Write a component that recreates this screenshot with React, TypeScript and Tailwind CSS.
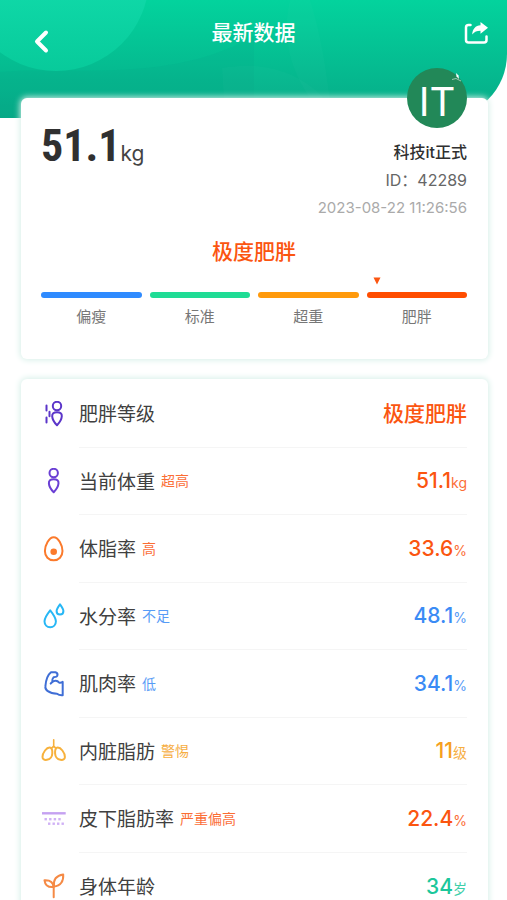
import type { ReactNode } from "react";

const Svg = ({ children }: { children: ReactNode }) => (
  <svg
    viewBox="0 0 26 26"
    className="h-[26px] w-[26px] shrink-0"
    fill="none"
    strokeWidth="2"
    strokeLinecap="round"
    strokeLinejoin="round"
    aria-hidden="true"
  >
    {children}
  </svg>
);

const ObesityIcon = () => (
  <Svg>
    <g stroke="#5b35c9">
      <circle cx="16" cy="5" r="4.2" />
      <path d="M16 11.300c-3.400 0-5 1.400-4.800 4 .2 3.200 2.300 6.400 4.800 8.900 2.500-2.500 4.600-5.700 4.800-8.900.2-2.600-1.400-4-4.800-4z" />
      <path d="M5.500 4.500v5M8.500 10.800v4.500M5.500 16.500v5" />
    </g>
  </Svg>
);

const WeightIcon = () => (
  <Svg>
    <g stroke="#6a3fd4">
      <circle cx="12.700" cy="5" r="4.200" />
      <path d="M12.700 11.300c-3.400 0-5 1.400-4.800 4 .2 3.200 2.300 6.400 4.800 8.900 2.500-2.500 4.600-5.700 4.800-8.900.2-2.600-1.400-4-4.800-4z" />
    </g>
  </Svg>
);

const FatIcon = () => (
  <Svg>
    <path
      stroke="#fb7a2c"
      d="M12.700 1.200c-4.700 0-8.800 8.300-8.800 13.800 0 5.500 3.700 9.300 8.800 9.300s8.800-3.800 8.800-9.300c0-5.500-4.100-13.800-8.800-13.800z"
    />
    <circle cx="12.700" cy="15.800" r="3.300" fill="#fb7a2c" />
  </Svg>
);

const WaterIcon = () => (
  <Svg>
    <g stroke="#27b7f5">
      <path d="M9.200 7.300C6.400 10.800 3.500 14.800 3.500 18.300c0 3.600 2.500 6 5.700 6s5.700-2.400 5.700-6c0-3.500-2.900-7.500-5.700-11z" />
      <path d="M19 1.300c-1.700 2.300-3.400 4.700-3.400 6.700 0 2.200 1.500 3.500 3.400 3.500s3.400-1.300 3.400-3.500c0-2-1.700-4.400-3.400-6.700z" />
    </g>
  </Svg>
);

const MuscleIcon = () => (
  <Svg>
    <path
      stroke="#3f6ed6"
      d="M10 1.300h4.500c1.500.5 2.300 2 1.800 3.500-.4 1.200-2 1.300-3.800 1.500-1.300 1.500-1.700 3-1.200 4.800 2-2 5-2 6.700.4 1.300.4 2.500.1 3.700-.6V24.200c-2.200.2-4.200-.3-5.700-1.500-3.400 0-6.900-.9-9.600-2.800-1.700-1.200-2.300-2.600-2-4.700C4.800 10.500 6.500 4 10 1.300zM11.300 11.100l-1.600 1.500"
    />
  </Svg>
);

const LungsIcon = () => (
  <Svg>
    <g stroke="#f7b13c">
      <path d="M12.700 1.800v6.400M12.700 8.200l-2.400 2.200M12.700 8.200l2.400 2.200" strokeWidth="1.600" />
      <path d="M9.500 9.700C5.500 8.800 1.500 15 1.500 19c0 2.400 2 3.300 4.400 2.800 3.300-.6 5.200-2.600 5.400-6.300.1-2.400-.1-5.300-1.800-5.800z" />
      <path d="M15.900 9.700c4-.9 8 5.300 8 9.300 0 2.400-2 3.300-4.400 2.800-3.300-.6-5.200-2.600-5.400-6.300-.1-2.400.1-5.300 1.800-5.800z" />
    </g>
  </Svg>
);

const SkinIcon = () => (
  <Svg>
    <path stroke="#c5a1f1" strokeWidth="2.400" strokeLinecap="butt" d="M1 7.300h23.700" />
    <g fill="#d0b1f5">
      <rect x="3.500" y="12" width="2.400" height="2.400" />
      <rect x="8.100" y="12" width="2.400" height="2.400" />
      <rect x="12.700" y="12" width="2.400" height="2.400" />
      <rect x="17.300" y="12" width="2.400" height="2.400" />
      <rect x="7" y="16.500" width="2.400" height="2.400" />
      <rect x="11.500" y="16.500" width="2.400" height="2.400" />
      <rect x="16" y="16.500" width="2.400" height="2.400" />
      <rect x="20.500" y="16.500" width="2.400" height="2.400" />
    </g>
  </Svg>
);

const AgeIcon = () => (
  <Svg>
    <g stroke="#f58a45">
      <path d="M12.700 24.300V14" />
      <path d="M12.900 13.500c-.7-6.500 2.500-11 9.300-12 .5 6.500-2.500 11.500-9.300 12z" />
      <path d="M12.500 14c-.3-4.500-3.500-7-9-6.700.6 4.700 3.700 7.200 9 6.700z" />
    </g>
  </Svg>
);

const LEVELS = [
  { name: "偏瘦", bar: "bg-[#2f8bff]" },
  { name: "标准", bar: "bg-[#1fdc95]" },
  { name: "超重", bar: "bg-[#ff9a0c]" },
  { name: "肥胖", bar: "bg-[#ff4d00]" },
];

const ROWS = [
  { icon: <ObesityIcon />, name: "肥胖等级", tag: "", value: "极度肥胖", unit: "", color: "text-[#fb5510]" },
  { icon: <WeightIcon />, name: "当前体重", tag: "超高", value: "51.1", unit: "kg", color: "text-[#fb5510]" },
  { icon: <FatIcon />, name: "体脂率", tag: "高", value: "33.6", unit: "%", color: "text-[#fb5510]" },
  { icon: <WaterIcon />, name: "水分率", tag: "不足", value: "48.1", unit: "%", color: "text-[#3a8bf5]" },
  { icon: <MuscleIcon />, name: "肌肉率", tag: "低", value: "34.1", unit: "%", color: "text-[#3a8bf5]" },
  { icon: <LungsIcon />, name: "内脏脂肪", tag: "警惕", value: "11", unit: "级", color: "text-[#f5a021]" },
  { icon: <SkinIcon />, name: "皮下脂肪率", tag: "严重偏高", value: "22.4", unit: "%", color: "text-[#fb5510]" },
  { icon: <AgeIcon />, name: "身体年龄", tag: "", value: "34", unit: "岁", color: "text-[#1cc79b]" },
];

const Header = () => (
  <header className="relative h-[118px] overflow-hidden rounded-br-[64px] bg-linear-to-b from-[#03d39d] to-[#06aa87] text-white">
    <svg className="absolute inset-0 h-full w-full" aria-hidden="true">
      <defs>
        <linearGradient id="bubble" x1="0" y1="0" x2="0" y2="1">
          <stop offset="0.5" stopColor="#12dbab" />
          <stop offset="1" stopColor="#08cc9c" />
        </linearGradient>
      </defs>
      <path d="M0 72C70 66 170 84 254 36V118H0z" fill="#069f80" opacity="0.12" />
      <path d="M222 68c30-6 70-2 100 28l10 22H225z" fill="#fff" opacity="0.02" />
      <path d="M290 0c-12 50 10 90 36 118h6c-6-50-10-80-22-118z" fill="#fff" opacity="0.02" />
      <circle cx="56" cy="-22" r="93" fill="url(#bubble)" opacity="0.9" />
    </svg>
    <div className="relative grid grid-cols-[1fr_auto_1fr] items-start px-[19px] pt-4">
      <button type="button" aria-label="返回" className="mt-3 w-fit px-3">
        <svg viewBox="0 0 20 26" className="h-[26px] w-5" fill="none" aria-hidden="true">
          <path d="M15 4.500L6 13.500l9 9" stroke="#fff" strokeWidth="4" strokeLinecap="round" strokeLinejoin="round" />
        </svg>
      </button>
      <h1 className="text-[21px] leading-[34px] font-medium">最新数据</h1>
      <button type="button" aria-label="分享" className="mt-[5px] w-fit justify-self-end">
        <svg viewBox="0 0 24 24" className="h-6 w-6" fill="none" aria-hidden="true">
          <path
            d="M6.500 4H4.500C3 4 2 5 2 6.500v12.500C2 20.500 3 21.500 4.500 21.500h15.500c1.500 0 2.500-1 2.500-2.500V15.500"
            stroke="#fff"
            strokeWidth="2.500"
            strokeLinecap="round"
          />
          <path d="M16.500 1L24 6.800l-7.500 6V9.800c-3.700 0-6 .9-8.300 3.700C8.500 8 11.500 4.500 16.500 4.200z" fill="#fff" />
        </svg>
      </button>
    </div>
  </header>
);

const Summary = () => (
  <section className="relative rounded-md bg-white pt-10 pr-[21px] pb-[27px] pl-5 shadow-[0_0_6px_1px_#d6efe8]">
    <div className="absolute -top-[30px] right-[21px] flex h-[60px] w-[60px] items-center justify-center rounded-full bg-[#228858]">
      <span className="pt-2 text-[40px] leading-none text-white">IT</span>
      <svg viewBox="0 0 12 9" className="absolute top-[5px] right-1 h-[9px] w-3" aria-hidden="true">
        <path d="M5 0l2.500 2.500L8 6 5.500 3.500z" fill="#fff" />
        <path d="M1 6.500l4-1 5 2.500" stroke="#9cc9b3" fill="none" />
      </svg>
    </div>
    <div className="flex justify-between">
      <p className="-mt-5 text-[#303030]">
        <span className="font-['Liberation_Sans_Narrow','Roboto_Condensed','Roboto',sans-serif] text-[44px] leading-[56px] font-bold">
          51.1
        </span>
        <span className="text-[21px] text-[#444]">kg</span>
      </p>
      <div className="text-right">
        <p className="text-[16px] leading-7 font-medium text-[#303030]">科技it正式</p>
        <p className="text-[16px] leading-7 text-[#666]">ID：42289</p>
        <p className="text-[15px] leading-7 text-[#aaa]">2023-08-22 11:26:56</p>
      </div>
    </div>
    <h2 className="mt-3.5 text-center text-[21px] leading-8 font-medium text-[#fb5510]">极度肥胖</h2>
    <div className="relative pt-6">
      <svg viewBox="0 0 8 8" className="absolute top-[9px] left-[78%] h-2 w-2" aria-hidden="true">
        <path d="M0.500 0.500h7L4 7.500z" fill="#fb5510" />
      </svg>
      <ul className="grid grid-cols-4 gap-2">
        {LEVELS.map((level) => (
          <li key={level.name} className="text-center text-[15px] leading-[30px] text-[#777]">
            <div className={`mb-1 h-1.5 rounded-full ${level.bar}`} />
            {level.name}
          </li>
        ))}
      </ul>
    </div>
  </section>
);

const Details = () => (
  <section className="rounded-md bg-white pt-px pr-[21px] pl-5 shadow-[0_0_6px_1px_#d6efe8]">
    <ul className="grid min-h-[540px] auto-rows-fr">
      {ROWS.map((row) => (
        <li key={row.name} className="group flex items-center gap-3">
          {row.icon}
          <div className="flex h-full flex-1 items-center border-b border-[#f5f5f5] group-last:border-b-0">
            <span className="font-['Noto_Sans_CJK_SC',sans-serif] text-[19px] text-[#404040]">{row.name}</span>
            <span className={`ml-1.5 flex-1 text-[14px] opacity-85 ${row.color}`}>{row.tag}</span>
            <span className={row.color}>
              <span className="text-[21px] font-medium">{row.value}</span>
              <span className="text-[14px] opacity-85">{row.unit}</span>
            </span>
          </div>
        </li>
      ))}
    </ul>
  </section>
);

const App = () => {
  return (
    <div className="min-h-screen bg-white font-['Inter','Noto_Sans_CJK_SC',sans-serif]">
      <Header />
      <main className="relative -mt-5 flex flex-col gap-5 pr-[19px] pl-[21px]">
        <Summary />
        <Details />
      </main>
    </div>
  );
};

export default App;
